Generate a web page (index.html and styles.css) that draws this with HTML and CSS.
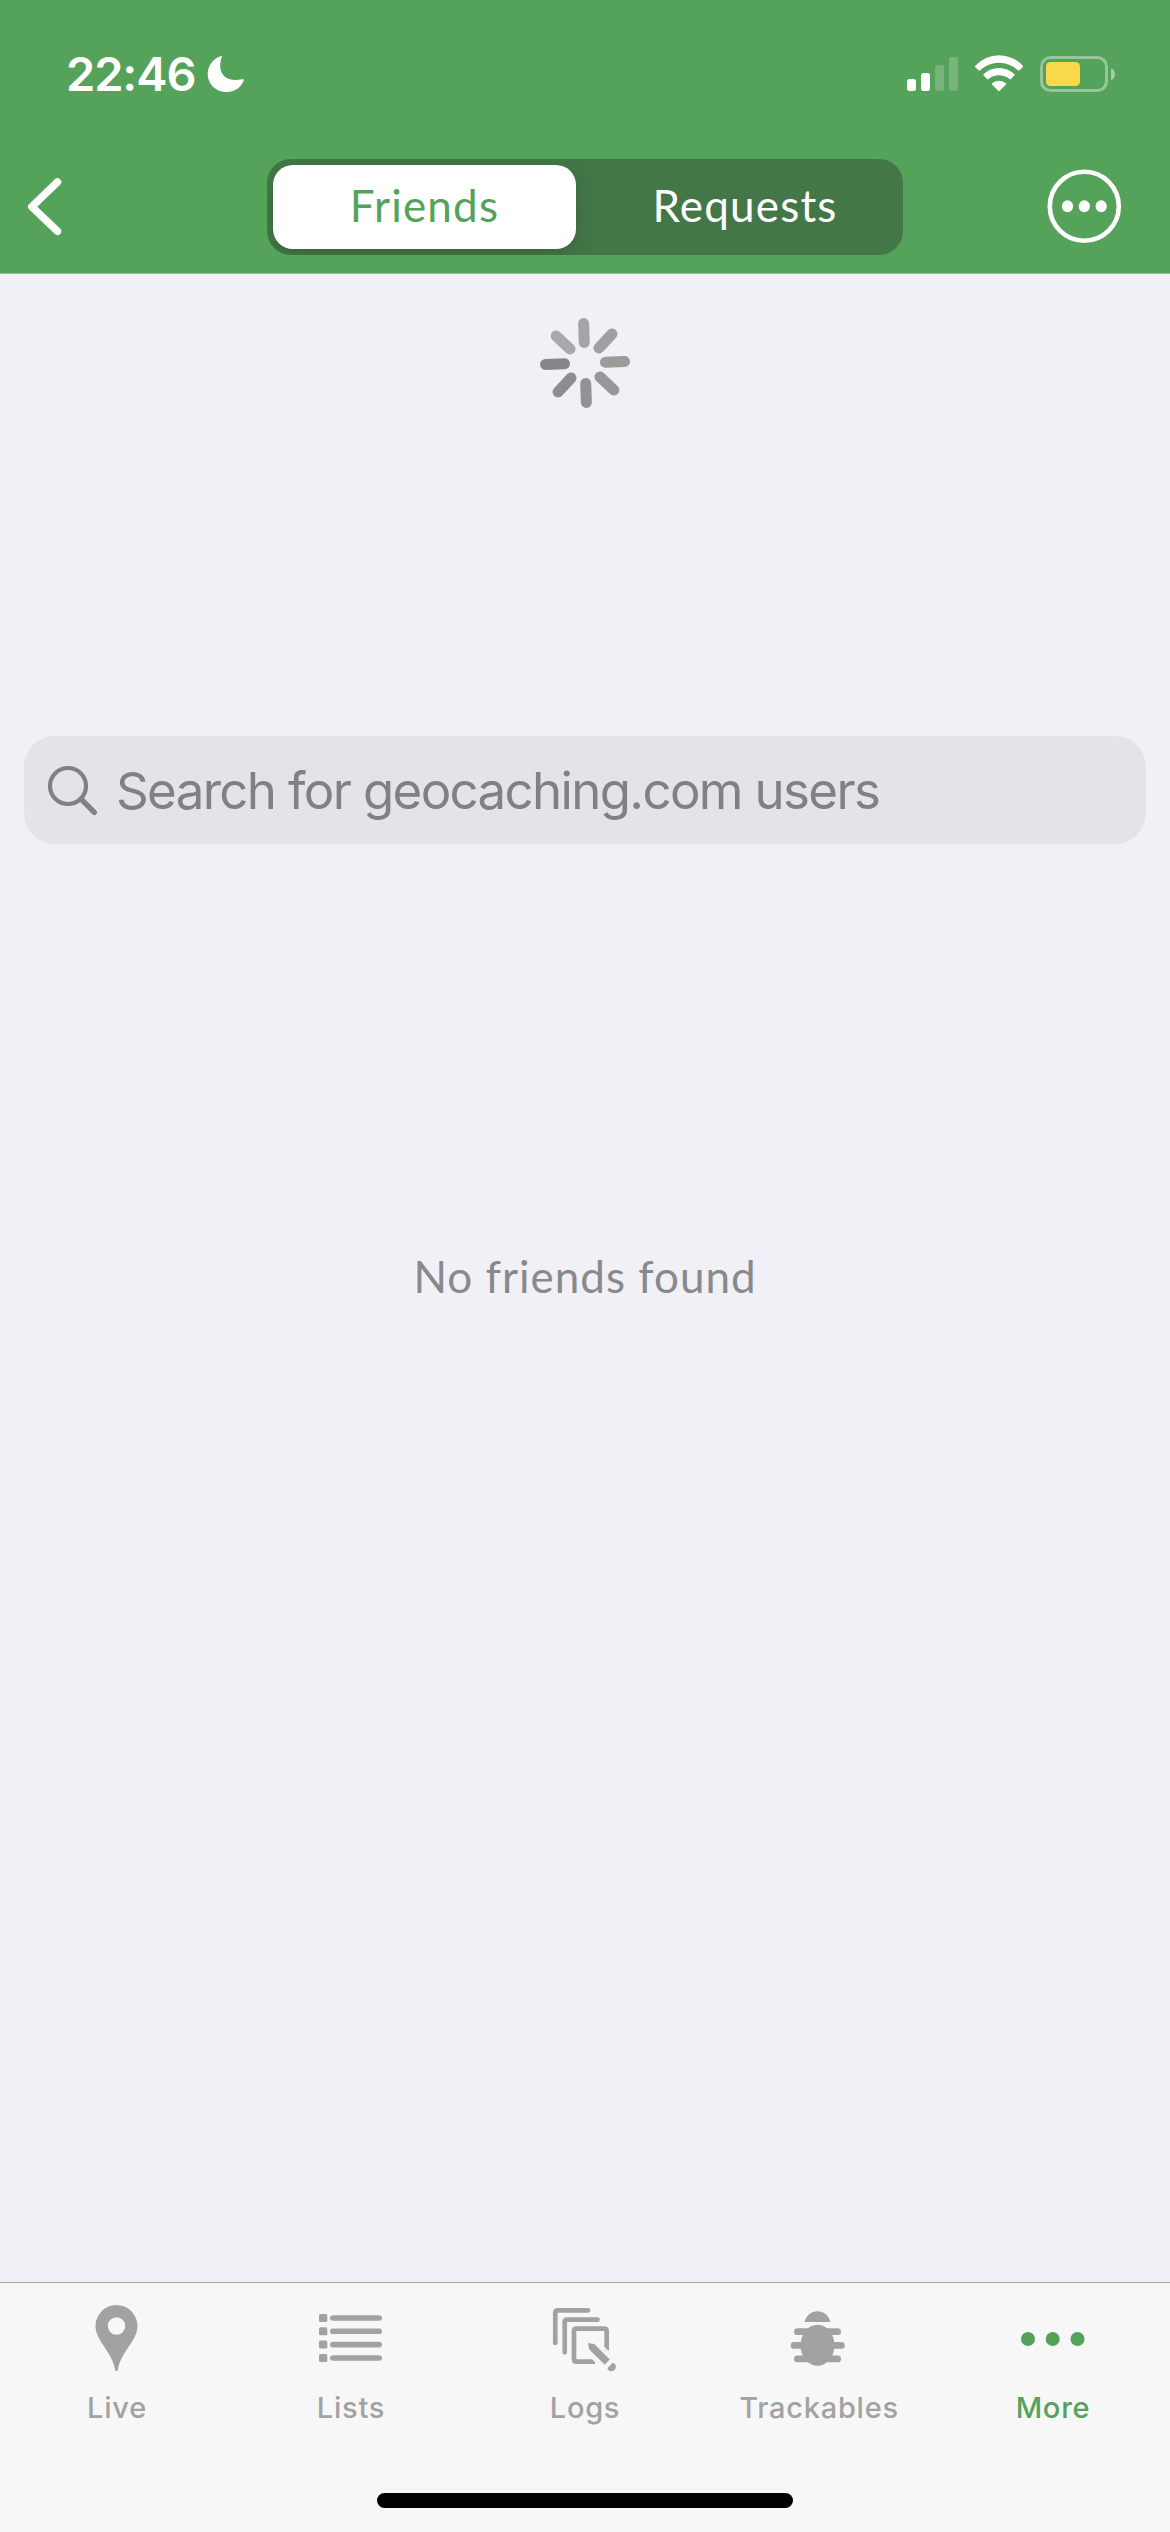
FILE: index.html
```html
<!DOCTYPE html>
<html lang="en">
<head>
<meta charset="utf-8">
<title>Friends</title>
<link rel="stylesheet" href="styles.css">
</head>
<body>
<div class="screen">
  <header class="header">
    <div class="status">
      <div class="status-left">
        <span class="time">22:46</span>
        <svg class="moon" viewBox="207 55 38 38" width="38" height="38"><path fill="#fff" d="M221 56C212.500 59 207.700 66 207.700 74C207.700 84.500 216 92 226.500 92C234.500 92 241 87.500 243.700 80.500C244 79.300 243.300 79 242 79.300C229 82.500 219.500 76 220.200 65C220.300 62 221 60 221.700 57.500C222 56.300 222 55.700 221 56Z"/></svg>
      </div>
      <svg class="indicators" viewBox="907 55 209 38" width="209" height="38">
        <g fill="#fff">
          <rect x="907" y="79" width="9" height="12" rx="2.500"/>
          <rect x="921" y="73" width="9" height="18" rx="2.500"/>
          <rect x="935" y="65" width="9" height="26" rx="2.500" opacity=".2"/>
          <rect x="949" y="57" width="9" height="34" rx="2.500" opacity=".2"/>
          <path d="M975.300 65.700A32 32 0 0 1 1022.700 65.700Q1023.500 66.500 1022.700 67.200L1019.500 70.200Q1018.700 71 1017.900 70.200A27.500 27.500 0 0 0 980.100 70.200Q979.300 71 978.500 70.200L975.300 67.200Q974.500 66.500 975.300 65.700Z"/>
          <path d="M983.700 74A22.500 22.500 0 0 1 1014.300 74Q1015.100 74.700 1014.300 75.500L1011 79Q1010.300 79.800 1009.500 79A16.500 16.500 0 0 0 988.500 79Q987.700 79.800 987 79L983.700 75.500Q982.900 74.700 983.700 74Z"/>
          <path d="M992 83.300A10.500 10.500 0 0 1 1006 83.300Q1006.500 84 1006 84.600L999.800 90.700Q999 91.500 998.200 90.700L992 84.600Q991.500 84 992 83.300Z"/>
          <path opacity=".48" d="M1111 68.500C1116.300 70 1116.300 78.500 1111 80Z"/>
        </g>
        <rect x="1041.500" y="57.500" width="65" height="33" rx="9" fill="none" stroke="#fff" stroke-opacity=".38" stroke-width="3"/>
        <rect x="1046" y="62" width="34" height="24" rx="4.500" fill="#f9d849"/>
      </svg>
    </div>
    <nav class="nav">
      <svg class="back" viewBox="27 177 36 60" width="36" height="60"><path d="M57.500 182L31.800 206.700L57.500 231.300" fill="none" stroke="#fff" stroke-width="7.500" stroke-linecap="round" stroke-linejoin="round"/></svg>
      <div class="segments">
        <div class="segment active"><span class="friends">Friends</span></div>
        <div class="segment"><span class="requests">Requests</span></div>
      </div>
      <svg class="menu" viewBox="1047 169 75 76" width="75" height="76">
        <circle cx="1084.300" cy="206.300" r="34.500" fill="none" stroke="#fff" stroke-width="4.600"/>
        <g fill="#fff"><ellipse cx="1067.500" cy="206.300" rx="5.600" ry="6"/><ellipse cx="1084.300" cy="206.300" rx="5.600" ry="6"/><ellipse cx="1101.200" cy="206.300" rx="5.600" ry="6"/></g>
      </svg>
    </nav>
  </header>
  <main class="content">
    <svg class="spinner" viewBox="-47 -47 94 94" width="94" height="94">
      <g stroke-width="11" stroke-linecap="round" transform="rotate(-2)">
        <path d="M0-20.500V-39.500" stroke="#a4a3a8"/>
        <path d="M0-20.500V-39.500" stroke="#a09fa4" transform="rotate(45)"/>
        <path d="M0-20.500V-39.500" stroke="#9b9b9c" transform="rotate(90)"/>
        <path d="M0-20.500V-39.500" stroke="#98979c" transform="rotate(135)"/>
        <path d="M0-20.500V-39.500" stroke="#929196" transform="rotate(180)"/>
        <path d="M0-20.500V-39.500" stroke="#8d8c91" transform="rotate(225)"/>
        <path d="M0-20.500V-39.500" stroke="#87868b" transform="rotate(270)"/>
        <path d="M0-20.500V-39.500" stroke="#a9a8ad" transform="rotate(315)"/>
      </g>
    </svg>
    <div class="search">
      <svg viewBox="47 765 51 51" width="51" height="51"><g fill="none" stroke="#818085"><circle cx="68" cy="786" r="18" stroke-width="4.200"/><path d="M81 799L94.300 812.300" stroke-width="5.400" stroke-linecap="round"/></g></svg>
      <span class="placeholder">Search for geocaching.com users</span>
    </div>
    <p class="empty">No friends found</p>
  </main>
  <footer class="footer">
    <div class="tabs">
      <div class="tab">
        <svg viewBox="72 2295 90 80" width="90" height="80"><path fill="#a2a2a2" fill-rule="evenodd" d="M116.500 2305A21 21 0 0 1 137.500 2326C137.500 2341 120.500 2352 118 2369.500Q117.800 2371 116.500 2371T115 2369.500C112.500 2352 95.500 2341 95.500 2326A21 21 0 0 1 116.500 2305ZM116.500 2317.300A8.700 8.700 0 1 0 116.500 2334.700A8.700 8.700 0 1 0 116.500 2317.300Z"/></svg>
        <span class="label">Live</span>
      </div>
      <div class="tab">
        <svg viewBox="306 2295 90 80" width="90" height="80"><g fill="#a2a2a2"><rect x="319" y="2314" width="8.300" height="8" rx="1.500"/><rect x="319" y="2327.300" width="8.300" height="8" rx="1.500"/><rect x="319" y="2340.600" width="8.300" height="8" rx="1.500"/><rect x="319" y="2354" width="8.300" height="8" rx="1.500"/><rect x="330" y="2315.200" width="52" height="5.600" rx="2.800"/><rect x="330" y="2328.500" width="52" height="5.600" rx="2.800"/><rect x="330" y="2341.800" width="52" height="5.600" rx="2.800"/><rect x="330" y="2355.200" width="52" height="5.600" rx="2.800"/></g></svg>
        <span class="label">Lists</span>
      </div>
      <div class="tab">
        <svg viewBox="540 2295 90 80" width="90" height="80"><g fill="none" stroke="#a2a2a2" stroke-width="4.700"><path stroke-linecap="round" d="M555.300 2343V2312.800Q555.300 2310.300 557.800 2310.300H588M564.700 2352.300V2322.200Q564.700 2319.700 567.200 2319.700H597.500"/><path d="M606.700 2350.500V2331.200Q606.700 2328.700 604.200 2328.700H576.500Q574 2328.700 574 2331.200V2359.200Q574 2361.700 576.500 2361.700H595"/></g><path fill="#f7f7f7" d="M590 2357L599 2366V2357ZM603 2345.500L611 2353.500L611 2356L603 2348Z"/><path fill="#a2a2a2" d="M588 2343L594.300 2344.100L609.800 2359.600L604.700 2364.700L589.100 2349.200ZM612.700 2362.800Q616 2363.500 615.900 2367Q615.300 2371 611.500 2371.200Q608 2371 607.500 2368.200Z"/></svg>
        <span class="label">Logs</span>
      </div>
      <div class="tab">
        <svg viewBox="774 2295 90 80" width="90" height="80"><g fill="#a2a2a2"><path d="M804.500 2322C806.500 2315 811.500 2311.300 817.500 2311.300S828.500 2315 830.400 2322Z"/><ellipse cx="817.500" cy="2345.300" rx="17" ry="20.500"/><rect x="794" y="2328.300" width="47" height="6.800" rx="3.400"/><rect x="790.700" y="2342" width="54" height="6.800" rx="3.400"/><rect x="794" y="2355.500" width="47" height="6.800" rx="3.400"/></g></svg>
        <span class="label">Trackables</span>
      </div>
      <div class="tab selected">
        <svg viewBox="1008 2295 90 80" width="90" height="80"><g fill="#55a25b"><circle cx="1028" cy="2339" r="7"/><circle cx="1052.700" cy="2339" r="7"/><circle cx="1077.500" cy="2339" r="7"/></g></svg>
        <span class="label">More</span>
      </div>
    </div>
    <div class="home"></div>
  </footer>
</div>
</body>
</html>
```
FILE: styles.css
```css
* { box-sizing: border-box; }
body { margin: 0; background: #f1f0f6; }
svg { display: block; flex: none; }
.screen { width: 1170px; height: 2532px; display: flex; flex-direction: column; font-family: Inter, "Liberation Sans", sans-serif; }
.header { height: 274px; background: #55a25b; border-bottom: 1px solid #a9aeaa; }
.status { height: 141px; padding: 7px 54px 0 66px; display: flex; align-items: center; justify-content: space-between; }
.status-left { display: flex; align-items: center; }
.time { width: 141px; font-size: 47px; line-height: 56px; font-weight: 600; letter-spacing: -1.1px; color: #fff; white-space: nowrap; }
.nav { height: 132px; padding-left: 27px; display: grid; grid-template-columns: 240px 780px 75px; align-items: center; }
.segments { width: 636px; height: 96px; padding: 6px; display: grid; grid-template-columns: 303px 1fr; border-radius: 24px; background: #437747; font-family: Lato, sans-serif; overflow: hidden; }
.segment { padding-bottom: 5px; display: flex; align-items: center; justify-content: center; border-radius: 20px; font-size: 44px; line-height: 54px; color: #fff; }
.active { background: #fff; color: #55a25b; box-shadow: 0 9px 24px rgba(0,0,0,.12), 0 3px 3px rgba(0,0,0,.04); }
.friends { letter-spacing: 1.2px; }
.requests { letter-spacing: 1.2px; padding-left: 17px; }
.content { flex: 1; display: flex; flex-direction: column; align-items: center; }
.spinner { margin-top: 42px; }
.search { width: 1122px; height: 108px; margin-top: 326px; padding-left: 23px; display: flex; align-items: center; gap: 18px; border-radius: 31px; background: #e4e3e8; }
.placeholder { padding-top: 2px; font-size: 51px; line-height: 62px; letter-spacing: -1.65px; color: #818085; white-space: nowrap; }
.empty { margin: 405px 0 0; font-family: Lato, sans-serif; font-size: 44px; line-height: 54px; letter-spacing: 1px; color: #898989; }
.footer { height: 250px; border-top: 1px solid #a6a6ab; background: #f7f7f7; }
.tabs { height: 210px; padding-top: 12px; display: grid; grid-template-columns: repeat(5, 1fr); }
.tab { display: flex; flex-direction: column; align-items: center; color: #a2a2a2; }
.label { margin-top: 15px; font-size: 29px; line-height: 36px; font-weight: 500; letter-spacing: .75px; }
.selected { color: #55a25b; }
.home { width: 416px; height: 15px; margin: 0 auto; border-radius: 8px; background: #000; }
```
